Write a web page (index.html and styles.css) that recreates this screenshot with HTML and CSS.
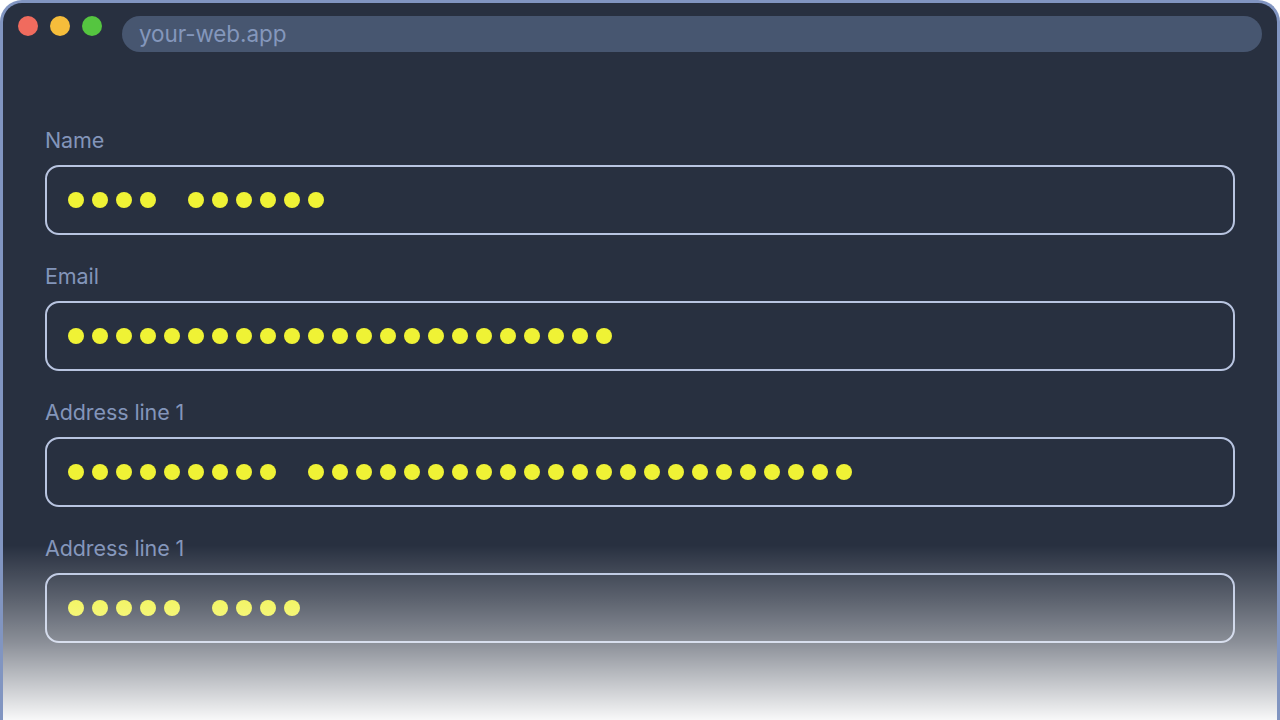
FILE: index.html
```html
<!DOCTYPE html>
<html lang="en">
  <head>
    <title>your-web.app</title>
    <meta name="viewport" content="width=device-width, initial-scale=1.0">
    <link rel="stylesheet" href="styles.css">
  </head>
  <body>
    <div class="window">
      <div class="titlebar">
        <span class="light red"></span>
        <span class="light yellow"></span>
        <span class="light green"></span>
        <div class="url">your-web.app</div>
      </div>
      <div class="form">
        <div class="field">
          <label>Name</label>
          <div class="input">
            <span class="dot"></span><span class="dot"></span><span class="dot"></span><span class="dot"></span>
            <span class="gap"></span>
            <span class="dot"></span><span class="dot"></span><span class="dot"></span><span class="dot"></span><span class="dot"></span><span class="dot"></span>
          </div>
        </div>
        <div class="field">
          <label>Email</label>
          <div class="input">
            <span class="dot"></span><span class="dot"></span><span class="dot"></span><span class="dot"></span><span class="dot"></span>
            <span class="dot"></span><span class="dot"></span><span class="dot"></span><span class="dot"></span><span class="dot"></span>
            <span class="dot"></span><span class="dot"></span><span class="dot"></span><span class="dot"></span><span class="dot"></span>
            <span class="dot"></span><span class="dot"></span><span class="dot"></span><span class="dot"></span><span class="dot"></span>
            <span class="dot"></span><span class="dot"></span><span class="dot"></span>
          </div>
        </div>
        <div class="field">
          <label>Address line 1</label>
          <div class="input">
            <span class="dot"></span><span class="dot"></span><span class="dot"></span><span class="dot"></span><span class="dot"></span>
            <span class="dot"></span><span class="dot"></span><span class="dot"></span><span class="dot"></span>
            <span class="gap"></span>
            <span class="dot"></span><span class="dot"></span><span class="dot"></span><span class="dot"></span><span class="dot"></span>
            <span class="dot"></span><span class="dot"></span><span class="dot"></span><span class="dot"></span><span class="dot"></span>
            <span class="dot"></span><span class="dot"></span><span class="dot"></span><span class="dot"></span><span class="dot"></span>
            <span class="dot"></span><span class="dot"></span><span class="dot"></span><span class="dot"></span><span class="dot"></span>
            <span class="dot"></span><span class="dot"></span><span class="dot"></span>
          </div>
        </div>
        <div class="field">
          <label>Address line 1</label>
          <div class="input">
            <span class="dot"></span><span class="dot"></span><span class="dot"></span><span class="dot"></span><span class="dot"></span>
            <span class="gap"></span>
            <span class="dot"></span><span class="dot"></span><span class="dot"></span><span class="dot"></span>
          </div>
        </div>
      </div>
      <div class="fade"></div>
    </div>
  </body>
</html>
```

FILE: styles.css
```css
body {
  margin: 0;
  background-color: #ffffff;
  font-family: Inter, "Noto Sans", sans-serif;
  overflow: hidden;
}
.window {
  position: relative;
  height: 720px;
  overflow: hidden;
  background-color: #283040;
  border: 3px solid #8195c1;
  border-bottom: none;
  border-radius: 22px 22px 0 0;
  box-sizing: border-box;
}
.titlebar {
  display: flex;
  align-items: flex-start;
  padding: 13px 15px 0 15px;
}
.light {
  width: 20px;
  height: 20px;
  border-radius: 50%;
  margin-right: 12px;
}
.red {
  background-color: #f06b5e;
}
.yellow {
  background-color: #f6bd3b;
}
.green {
  background-color: #55c540;
  margin-right: 20px;
}
.url {
  flex: 1;
  height: 36px;
  line-height: 36px;
  border-radius: 18px;
  background-color: #475670;
  color: #8497bc;
  font-size: 22.5px;
  padding-left: 17px;
  letter-spacing: -0.1px;
}
.form {
  padding: 74px 42px 0 42px;
}
.field {
  margin-bottom: 27px;
}
.field label {
  display: block;
  height: 28px;
  line-height: 28px;
  font-size: 21.5px;
  color: #8395ba;
  margin-bottom: 11px;
  letter-spacing: -0.1px;
}
.input {
  display: flex;
  align-items: center;
  height: 70px;
  border: 2.5px solid #b8c4e0;
  border-radius: 14px;
  box-sizing: border-box;
  padding-left: 20.5px;
}
.dot {
  width: 16px;
  height: 16px;
  border-radius: 50%;
  background-color: #eff235;
  margin-right: 8px;
}
.gap {
  width: 24px;
}
.fade {
  position: absolute;
  left: -3px;
  right: -3px;
  top: 542px;
  height: 180px;
  background: linear-gradient(to bottom,
    rgba(255, 255, 255, 0) 0%,
    rgba(255, 255, 255, 0.25) 31%,
    rgba(255, 255, 255, 0.46) 54%,
    rgba(255, 255, 255, 0.8) 83%,
    rgba(255, 255, 255, 1) 100%);
}
```
